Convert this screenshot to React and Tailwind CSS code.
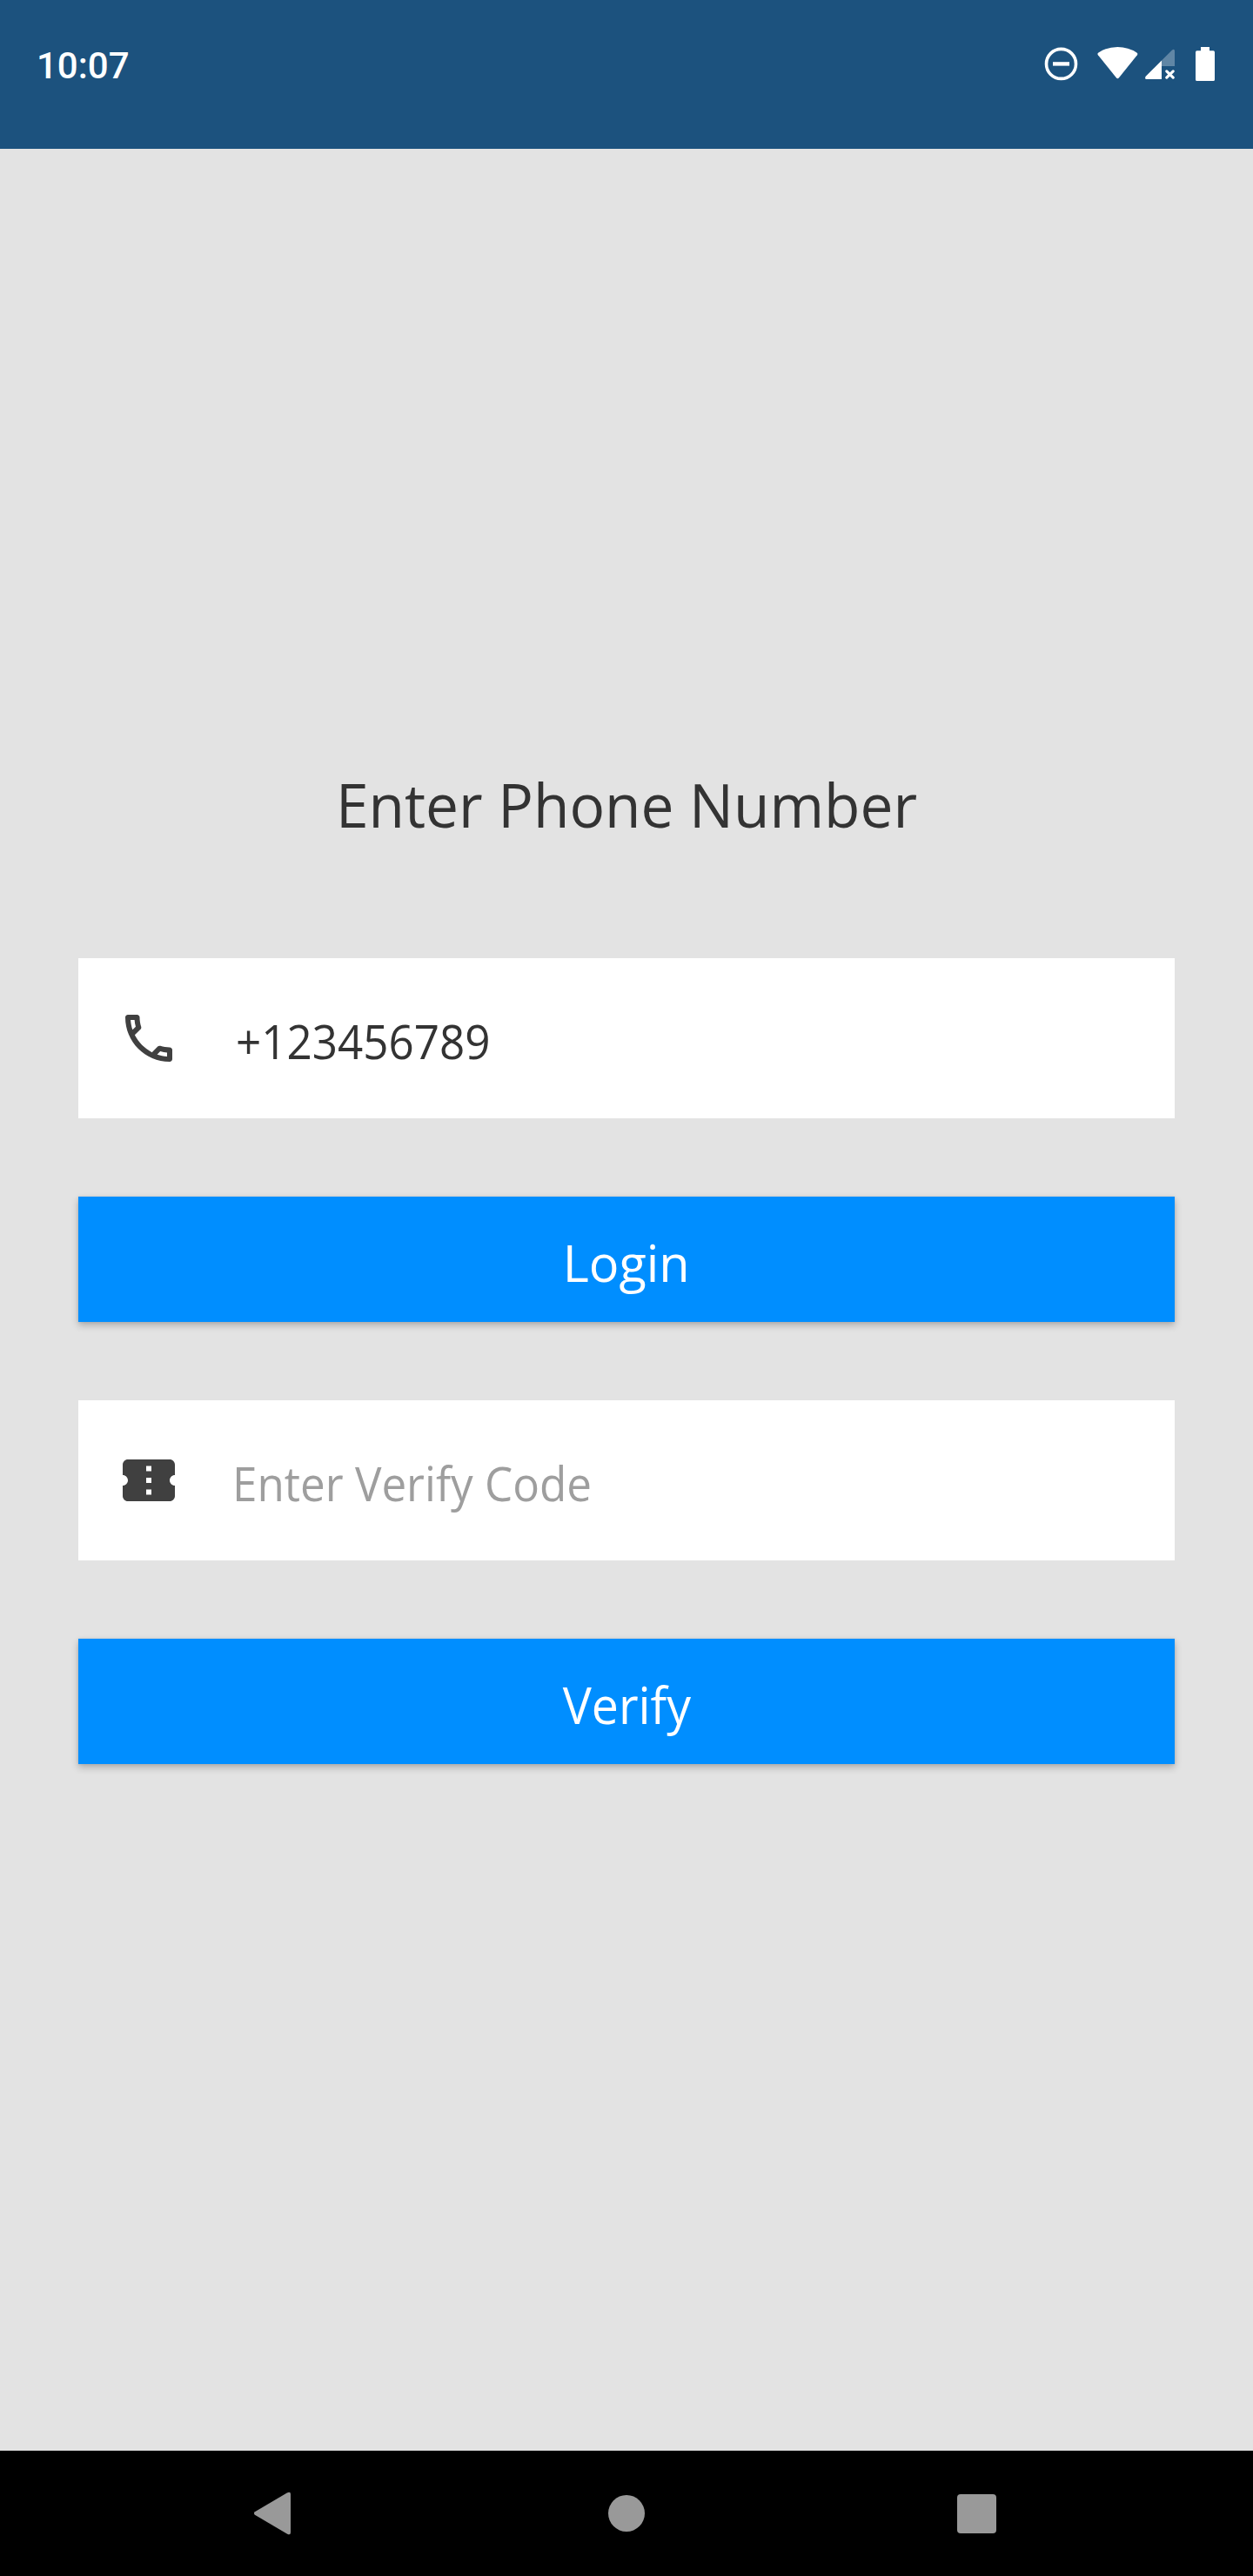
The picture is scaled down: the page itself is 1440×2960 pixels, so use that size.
function StatusBar() {
  return (
    <header className="flex h-[171px] shrink-0 items-start justify-between bg-[#1c527e] pr-[44px] pl-[42px] text-white">
      <span className="mt-[51px] font-['Roboto',sans-serif] text-[42px] leading-[49px] font-medium">10:07</span>
      <div className="mt-[54px] flex items-start">
        <svg className="mr-[22px] h-[39px] w-[39px]" viewBox="0 0 39 39" fill="none" stroke="currentColor">
          <circle cx="19.5" cy="19.4" r="17" strokeWidth="3.6" />
          <path d="M10 19.4H29" strokeWidth="4.4" />
        </svg>
        <svg className="mr-[8px] h-[37px] w-[47px]" viewBox="0 0 47 37" fill="currentColor">
          <path d="M.9 9.2Q-.3 7.7 1.4 6.5Q11 0 23.4 0T45.4 6.5Q47 7.7 45.9 9.2L25 35.3Q23.4 37 21.8 35.3Z" />
        </svg>
        <svg className="mr-[24px] h-[38px] w-[34px]" viewBox="0 0 34 38" fill="currentColor">
          <path d="M19 15.5L30.8 3.7Q34 1.5 34 5V22H19Z" opacity=".3" />
          <path d="M19 15.5V37H1.5Q-.8 36.6 .7 33.8Z" />
          <path d="M24.8 27.8L32.2 35.2M32.2 27.8L24.8 35.2" fill="none" stroke="currentColor" strokeWidth="3.1" strokeLinecap="round" />
        </svg>
        <svg className="h-[39px] w-[22px]" viewBox="0 0 22 39" fill="currentColor">
          <path d="M6 0H16V4.3H20.4Q22 4.3 22 5.9V37.4Q22 39 20.4 39H1.6Q0 39 0 37.4V5.9Q0 4.3 1.6 4.3H6Z" />
        </svg>
      </div>
    </header>
  );
}

function PhoneIcon() {
  return (
    <svg className="size-[72px] shrink-0" viewBox="0 0 24 24" fill="#404040">
      <path d="M6.54 5c.06.89.21 1.76.45 2.59l-1.2 1.2c-.41-1.2-.67-2.47-.76-3.79h1.51m9.86 12.02c.85.24 1.72.39 2.6.45v1.49c-1.32-.09-2.59-.35-3.8-.75l1.2-1.19M7.5 3H4c-.55 0-1 .45-1 1 0 9.39 7.61 17 17 17 .55 0 1-.45 1-1v-3.49c0-.55-.45-1-1-1-1.24 0-2.45-.2-3.57-.57-.1-.04-.21-.05-.31-.05-.26 0-.51.1-.71.29l-2.2 2.2c-2.83-1.45-5.15-3.76-6.59-6.59l2.2-2.2c.28-.28.36-.67.25-1.02C8.7 6.45 8.5 5.25 8.5 4c0-.55-.45-1-1-1z" />
    </svg>
  );
}

function TicketIcon() {
  return (
    <svg className="size-[72px] shrink-0" viewBox="0 0 24 24" fill="#404040">
      <path d="M22 10V6c0-1.11-.9-2-2-2H4c-1.1 0-1.99.89-1.99 2v4c1.1 0 1.99.9 1.99 2s-.89 2-2 2v4c0 1.1.9 2 2 2h16c1.1 0 2-.9 2-2v-4c-1.1 0-2-.9-2-2s.9-2 2-2zm-9 7.5h-2v-2h2v2zm0-4.5h-2v-2h2v2zm0-4.5h-2v-2h2v2z" />
    </svg>
  );
}

function Field({ icon, className, ...props }) {
  return (
    <label className="flex h-[184px] items-center bg-white pl-[45px]">
      {icon}
      <input
        className={`h-full min-w-0 flex-1 origin-left scale-x-[0.947] bg-transparent pt-[6px] text-[54px] text-[#333333] outline-none placeholder:text-[#9e9e9e] ${className}`}
        {...props}
      />
    </label>
  );
}

function ActionButton({ children, textClass }) {
  return (
    <button
      type="button"
      className="flex h-[144px] items-center justify-center bg-[#008eff] pt-[6px] text-[59px] text-white shadow-[0_4px_8px_rgba(0,0,0,0.24),0_0_3px_rgba(0,0,0,0.10)]"
    >
      <span className={`inline-block ${textClass}`}>{children}</span>
    </button>
  );
}

function NavBar() {
  return (
    <nav className="flex h-[144px] shrink-0 items-center justify-between bg-black pr-[295px] pl-[291px]">
      <svg className="h-[50px] w-[44px]" viewBox="0 0 44 50" fill="#999999">
        <path d="M1.9 23.2L38.8 1.5Q43 -.8 43 3V47Q43 50.8 38.8 48.5L1.9 26.8Q0 25 1.9 23.2Z" />
      </svg>
      <span className="ml-[5px] size-[42px] rounded-full bg-[#999999]" />
      <span className="size-[45px] rounded-[4px] bg-[#999999]" />
    </nav>
  );
}

export default function App() {
  return (
    <div className="flex h-[2960px] w-[1440px] flex-col overflow-hidden bg-[#e3e3e3] font-['Open_Sans','Noto_Sans',sans-serif]">
      <StatusBar />
      <main className="flex flex-1 flex-col px-[90px] pt-[705px]">
        <h1 className="scale-x-[0.966] text-center text-[70px] leading-[96px] text-[#333333]">Enter Phone Number</h1>
        <form className="mt-[129px] flex flex-col gap-[90px]">
          <Field icon={<PhoneIcon />} className="ml-[64px]" type="tel" defaultValue="+123456789" />
          <ActionButton textClass="scale-x-[0.977]">Login</ActionButton>
          <Field icon={<TicketIcon />} className="ml-[60px]" type="text" placeholder="Enter Verify Code" />
          <ActionButton textClass="scale-x-[0.940]">Verify</ActionButton>
        </form>
      </main>
      <NavBar />
    </div>
  );
}
